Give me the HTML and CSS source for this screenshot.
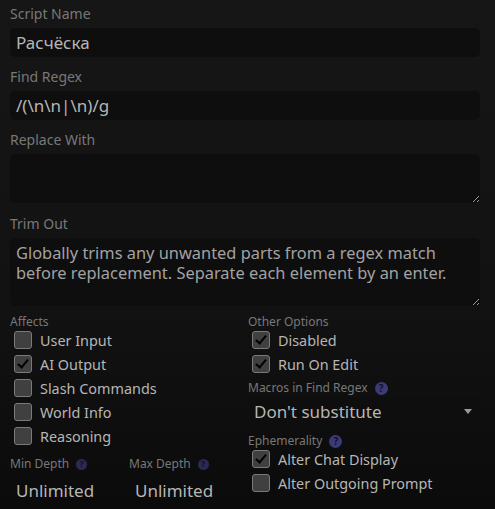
FILE: index.html
```html
<!DOCTYPE html>
<html lang="en">
<head>
    <meta charset="UTF-8">
    <title>Regex Script Editor</title>
    <link rel="stylesheet" href="styles.css">
</head>
<body>
    <div class="editor">
        <label class="field-label">Script Name</label>
        <input class="text-input" type="text" value="Расчёска">

        <label class="field-label">Find Regex</label>
        <input class="text-input" type="text" value="/(\n\n|\n)/g">

        <label class="field-label">Replace With</label>
        <textarea class="text-area short"></textarea>

        <label class="field-label">Trim Out</label>
        <textarea class="text-area tall" placeholder="Globally trims any unwanted parts from a regex match before replacement. Separate each element by an enter."></textarea>

        <div class="options">
            <div class="column">
                <div class="small-label">Affects</div>
                <label class="check-row"><span class="box"></span>User Input</label>
                <label class="check-row"><span class="box checked"></span>AI Output</label>
                <label class="check-row"><span class="box"></span>Slash Commands</label>
                <label class="check-row"><span class="box"></span>World Info</label>
                <label class="check-row"><span class="box"></span>Reasoning</label>

                <div class="depths">
                    <div class="depth">
                        <div class="small-label">Min Depth <span class="help muted">?</span></div>
                        <div class="depth-value">Unlimited</div>
                    </div>
                    <div class="depth">
                        <div class="small-label">Max Depth <span class="help muted">?</span></div>
                        <div class="depth-value">Unlimited</div>
                    </div>
                </div>
            </div>

            <div class="column">
                <div class="small-label">Other Options</div>
                <label class="check-row"><span class="box checked"></span>Disabled</label>
                <label class="check-row"><span class="box checked"></span>Run On Edit</label>

                <div class="small-label macros">Macros in Find Regex <span class="help">?</span></div>
                <div class="select">Don't substitute<span class="caret"></span></div>

                <div class="small-label">Ephemerality <span class="help">?</span></div>
                <label class="check-row"><span class="box checked"></span>Alter Chat Display</label>
                <label class="check-row"><span class="box"></span>Alter Outgoing Prompt</label>
            </div>
        </div>
    </div>
</body>
</html>
```

FILE: styles.css
```css
body {
    margin: 0;
    background: linear-gradient(180deg, #161616 0%, #121212 60%, #0b0b0b 100%);
    font-family: "Noto Sans", sans-serif;
    color: #b6b6b6;
    height: 509px;
    overflow: hidden;
}
.editor {
    padding: 4px 15px 0 10px;
    display: flex;
    flex-direction: column;
}
.field-label {
    font-size: 14px;
    line-height: 20px;
    color: #787878;
    margin-bottom: 4px;
}
.text-input,
.text-area {
    box-sizing: border-box;
    width: 100%;
    background: #0e0e0e;
    border: none;
    border-radius: 5px;
    color: #b6b6b6;
    font-family: "Noto Sans", sans-serif;
    padding: 0 6px;
    outline: none;
}
.text-input {
    height: 29px;
    font-size: 17px;
    margin-bottom: 10px;
}
.text-area {
    resize: vertical;
    font-size: 16.4px;
    line-height: 20px;
    padding: 5px 6px;
    margin-bottom: 11px;
}
.text-area::placeholder {
    color: #a2a2a2;
}
.short {
    height: 49px;
}
.tall {
    height: 68px;
    margin-bottom: 9px;
}
.options {
    display: flex;
    gap: 6px;
}
.column {
    flex: 1 1 0;
    min-width: 0;
    display: flex;
    flex-direction: column;
}
.small-label {
    font-size: 12px;
    line-height: 14px;
    color: #787878;
    display: flex;
    align-items: center;
    gap: 7px;
    margin-bottom: -1px;
}
.check-row {
    display: flex;
    align-items: center;
    gap: 8px;
    height: 24px;
    padding-left: 4px;
    font-size: 14.4px;
    color: #b6b6b6;
}
.box {
    box-sizing: border-box;
    width: 18px;
    height: 18px;
    border: 1px solid #7a7a7a;
    border-radius: 3px;
    background: #404040;
    position: relative;
}
.box.checked::after {
    content: "";
    position: absolute;
    left: 5px;
    top: 1px;
    width: 4px;
    height: 9px;
    border: solid #000;
    border-width: 0 2.5px 2.5px 0;
    transform: rotate(40deg);
}
.help {
    display: inline-flex;
    align-items: center;
    justify-content: center;
    width: 13px;
    height: 13px;
    border-radius: 50%;
    background: #3b3b78;
    color: #11112a;
    font-size: 10px;
    font-weight: bold;
}
.help.muted {
    width: 11px;
    height: 11px;
    font-size: 9px;
    background: #2a2a52;
}
.depths {
    display: flex;
    margin-top: 9px;
}
.depth {
    flex: 0 0 119px;
}
.depth-value {
    font-size: 17px;
    padding: 9px 6px 0;
    line-height: 24px;
}
.macros {
    margin-top: 5px;
}
.select {
    display: flex;
    align-items: center;
    justify-content: space-between;
    height: 28px;
    margin: 3px 0 9px;
    padding: 0 8px 0 6px;
    background: #0e0e0e;
    border-radius: 5px;
    font-size: 17px;
}
.caret {
    width: 0;
    height: 0;
    border-left: 4px solid transparent;
    border-right: 4px solid transparent;
    border-top: 5px solid #9a9a9a;
}
```
